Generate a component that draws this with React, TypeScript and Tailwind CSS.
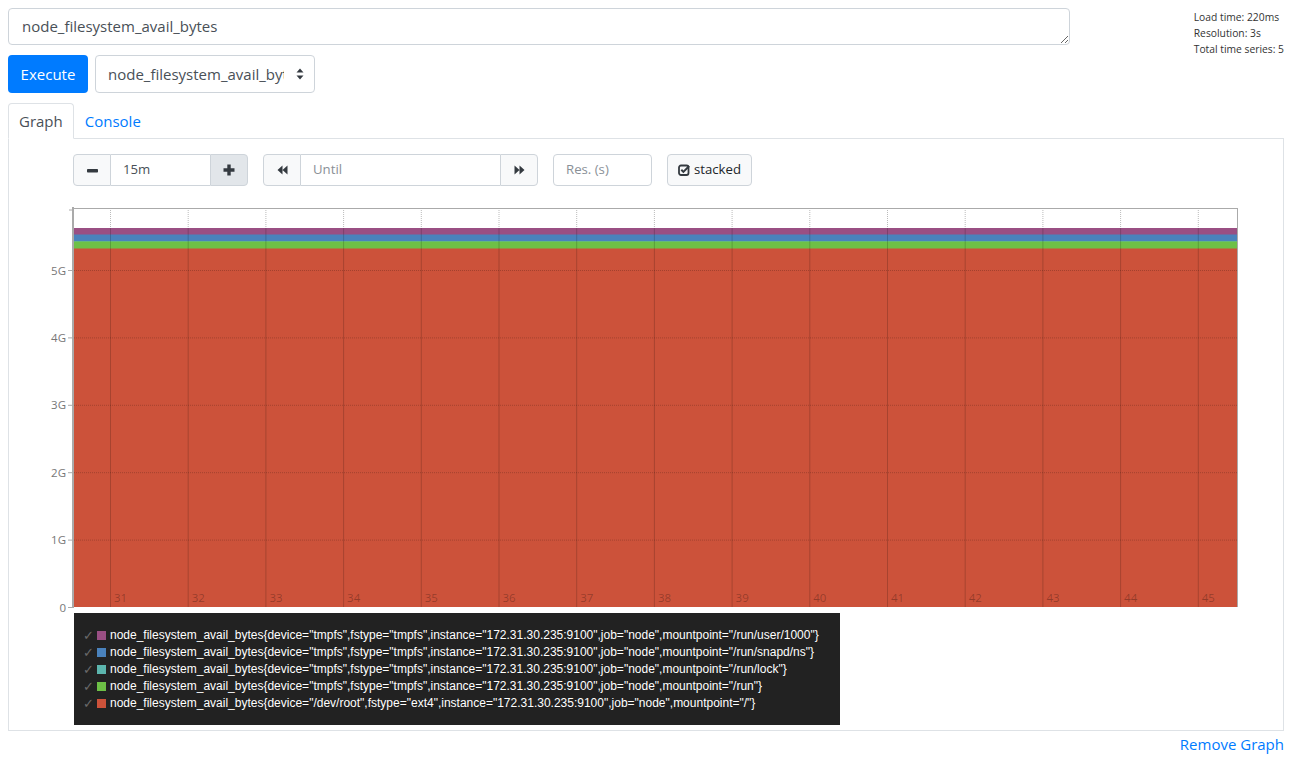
import React from "react";

const FONT = { fontFamily: '"Open Sans", "Noto Sans", sans-serif' };

const series = [
  { color: "#9a4f83", top: 28, label: 'node_filesystem_avail_bytes{device="tmpfs",fstype="tmpfs",instance="172.31.30.235:9100",job="node",mountpoint="/run/user/1000"}' },
  { color: "#4a82bc", top: 34.5, label: 'node_filesystem_avail_bytes{device="tmpfs",fstype="tmpfs",instance="172.31.30.235:9100",job="node",mountpoint="/run/snapd/ns"}' },
  { color: "#5cb5ad", top: 41, label: 'node_filesystem_avail_bytes{device="tmpfs",fstype="tmpfs",instance="172.31.30.235:9100",job="node",mountpoint="/run/lock"}' },
  { color: "#6ec046", top: 41.5, label: 'node_filesystem_avail_bytes{device="tmpfs",fstype="tmpfs",instance="172.31.30.235:9100",job="node",mountpoint="/run"}' },
  { color: "#cc523a", top: 48.5, label: 'node_filesystem_avail_bytes{device="/dev/root",fstype="ext4",instance="172.31.30.235:9100",job="node",mountpoint="/"}' },
];

const X0 = 65;
const X1 = 1229;
const Y0 = 407;
const UNIT = 67.4;

const Chart = () => {
  const vlines = Array.from({ length: 15 }, (_, i) => 101 + i * 77.7);
  const gs = [1, 2, 3, 4, 5];
  return (
    <svg width={1274} height={413} className="block">
      <rect x={X0} y={8} width={X1 - X0} height={Y0 - 8} fill="#fff" />
      {series.map((s) => (
        <rect key={s.color} x={X0} y={s.top} width={X1 - X0} height={Y0 - s.top} fill={s.color} />
      ))}
      {vlines.map((x) => (
        <line key={"w" + x} x1={x + 0.5} x2={x + 0.5} y1={8} y2={28} stroke="#bbb" strokeDasharray="1 1" />
      ))}
      {vlines.map((x) => (
        <line key={"d" + x} x1={x + 0.5} x2={x + 0.5} y1={28} y2={Y0} stroke="rgba(0,0,0,0.18)" />
      ))}
      {gs.map((g) => (
        <line key={"h" + g} x1={X0} x2={X1} y1={Y0 - g * UNIT + 0.5} y2={Y0 - g * UNIT + 0.5} stroke="rgba(0,0,0,0.2)" strokeDasharray="1 1" />
      ))}
      {vlines.map((x, i) => (
        <text key={"t" + x} x={x + 4} y={402} fontSize={11.5} fill="rgba(0,0,0,0.28)" style={FONT}>
          {31 + i}
        </text>
      ))}
      <line x1={X0} x2={X1} y1={8.5} y2={8.5} stroke="#aaa" />
      <line x1={X1 - 0.5} x2={X1 - 0.5} y1={8} y2={Y0} stroke="#aaa" />
      <line x1={64} x2={64} y1={7} y2={Y0 + 1} stroke="#aaa" strokeWidth={2} />
      <line x1={60} x2={64} y1={10} y2={10} stroke="#aaa" />
      {[0, ...gs].map((g) => (
        <g key={"y" + g}>
          <line x1={59} x2={64} y1={Y0 - g * UNIT + 0.5} y2={Y0 - g * UNIT + 0.5} stroke="#aaa" />
          <text x={57} y={Y0 - g * UNIT + 4.5} fontSize={11.5} fill="#777" textAnchor="end" style={FONT}>
            {g === 0 ? "0" : `${g}G`}
          </text>
        </g>
      ))}
    </svg>
  );
};

const Btn = ({ children, className = "" }: { children: React.ReactNode; className?: string }) => (
  <div className={`flex h-[32px] w-[38px] items-center justify-center border border-[#ced4da] ${className}`}>{children}</div>
);

export default function App() {
  return (
    <div className="min-h-[758px] bg-white px-2 pt-2 text-[#212529]" style={FONT}>
      <div className="flex h-[37px] w-[1276px] items-start">
        <textarea
          defaultValue="node_filesystem_avail_bytes"
          className="h-[37px] w-[1062px] resize-y rounded-[4px] border border-[#ced4da] px-[13px] py-[5px] text-[15px] leading-[24px] text-[#495057] outline-none"
          style={FONT}
        />
        <div className="ml-auto pl-[2px] pt-[1px] text-[10.3px] leading-[16px] text-[#333]">
          <div>Load time: 220ms</div>
          <div>Resolution: 3s</div>
          <div>Total time series: 5</div>
        </div>
      </div>

      <div className="mt-[10px] flex items-center gap-[7px]">
        <div className="flex h-[38px] w-[80px] items-center justify-center rounded-[4px] bg-[#007bff] text-[15px] text-white">Execute</div>
        <div className="flex h-[38px] w-[220px] items-center overflow-hidden rounded-[4px] border border-[#ced4da] pl-[12px] pr-[10px] text-[15px] text-[#495057]">
          <span className="w-[176px] overflow-hidden whitespace-nowrap">node_filesystem_avail_bytes</span>
          <svg width="8" height="12" viewBox="0 0 8 12" className="ml-auto">
            <path d="M4 0.5 L7.5 4.5 H0.5 Z M4 11.5 L7.5 7.5 H0.5 Z" fill="#343a40" />
          </svg>
        </div>
      </div>

      <div className="mt-[9px] flex w-[1276px] items-end">
        <div className="relative -mb-px h-[36px] rounded-t-[4px] border border-b-white border-[#dee2e6] bg-white px-[10px] pt-[6px] text-[15px] text-[#495057]">
          Graph
        </div>
        <div className="h-[36px] px-[11px] pt-[8px] text-[15px] text-[#007bff]">Console</div>
      </div>

      <div className="w-[1276px] border border-[#dee2e6]">
        <div className="ml-[64px] mt-[15px] flex items-center text-[13.2px] text-[#495057]">
          <div className="flex">
            <Btn className="rounded-l-[4px] bg-[#f8f9fa]">
              <svg width="11" height="11" viewBox="0 0 11 11"><rect x="0" y="4" width="11" height="3.5" rx="0.8" fill="#343a40" /></svg>
            </Btn>
            <div className="flex h-[32px] w-[99px] items-center border-y border-[#ced4da] pl-[12px]">15m</div>
            <Btn className="rounded-r-[4px] bg-[#e2e6ea]">
              <svg width="12" height="12" viewBox="0 0 12 12"><path d="M4.3 0.5h3.4v3.8h3.8v3.4H7.7v3.8H4.3V7.7H0.5V4.3h3.8z" fill="#343a40" /></svg>
            </Btn>
          </div>
          <div className="ml-[15px] flex">
            <Btn className="rounded-l-[4px] bg-[#f8f9fa]">
              <svg width="11" height="10" viewBox="0 0 11 10"><path d="M0.5 5L5.5 0.5V9.5Z M5.5 5L10.5 0.5V9.5Z" fill="#343a40" /></svg>
            </Btn>
            <div className="flex h-[32px] w-[199px] items-center border-y border-[#ced4da] pl-[12px] text-[#8a9097]">Until</div>
            <Btn className="rounded-r-[4px] bg-[#f8f9fa]">
              <svg width="11" height="10" viewBox="0 0 11 10"><path d="M10.5 5L5.5 0.5V9.5Z M5.5 5L0.5 0.5V9.5Z" fill="#343a40" /></svg>
            </Btn>
          </div>
          <div className="ml-[15px] flex h-[32px] w-[99px] items-center rounded-[4px] border border-[#ced4da] pl-[12px] text-[#8a9097]">Res. (s)</div>
          <div className="ml-[15px] flex h-[32px] w-[85px] items-center justify-center gap-[4px] rounded-[4px] border border-[#ced4da] bg-[#f8f9fa] text-[#212529]">
            <svg width="12" height="12" viewBox="0 0 12 12">
              <rect x="1" y="1.5" width="9.5" height="9.5" rx="2" fill="none" stroke="#343a40" strokeWidth="1.8" />
              <path d="M3.3 5.8 L5.4 7.9 L11.2 2" fill="none" stroke="#343a40" strokeWidth="2" />
            </svg>
            <span>stacked</span>
          </div>
        </div>

        <div className="mt-[14px]">
          <Chart />
        </div>

        <div
          className="mb-[5px] ml-[65px] w-[766px] bg-[#222] pb-[13px] pl-[9px] pt-[14px] text-[12px] leading-[17px] text-white"
          style={{ fontFamily: '"Liberation Sans", Arial, sans-serif' }}
        >
          {series.map((s) => (
            <div key={s.color} className="flex items-center whitespace-nowrap">
              <span className="w-[14px] text-[13px] leading-[17px] text-[#6a6a6a]">✓</span>
              <span className="mr-[4px] inline-block h-[9px] w-[9px]" style={{ backgroundColor: s.color }} />
              <span>{s.label}</span>
            </div>
          ))}
        </div>
      </div>

      <div className="mt-[1px] flex w-[1276px] justify-end text-[15px] leading-[24px] text-[#007bff]">Remove Graph</div>
    </div>
  );
}
